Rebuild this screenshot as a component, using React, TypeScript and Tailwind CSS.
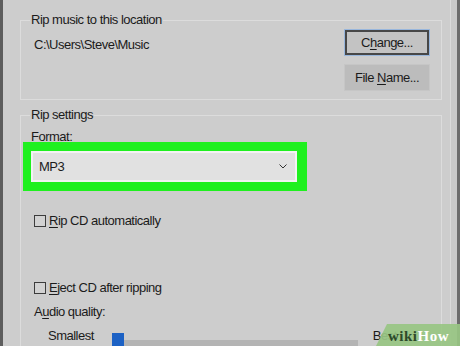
import React from 'react';

function CheckRow({ accel, rest }: { accel: string; rest: string }) {
    return (
        <div className="flex items-center gap-[3px] h-[16px]">
            <span className="w-[12px] h-[12px] border border-[#3c3c3c] bg-[#d2d2d2]" />
            <span>
                <u className="underline-offset-2">{accel}</u>
                {rest}
            </span>
        </div>
    );
}

export default function App() {
    return (
        <div className="relative flex h-[346px] w-[460px] overflow-hidden bg-[#cdcdcd] text-[13px] leading-[16px] tracking-[-0.5px] text-[#1b1b1b] font-['Liberation_Sans',Arial,sans-serif]">
            <div className="w-[3px] shrink-0 bg-[#5d5d5d]" />

            <div className="flex flex-1 flex-col gap-[7px] pl-[17px] pr-[8px] pt-[12px]">
                {/* Rip music to this location */}
                <fieldset className="border border-[#dcdcdc] pl-[13px] pr-[11px] pt-[1px] pb-[8px]">
                    <legend className="-ml-[4px] px-[1px]">Rip music to this location</legend>
                    <div className="flex justify-between">
                        <div className="mt-[8px]">C:\Users\Steve\Music</div>
                        <div className="flex flex-col gap-[8px]">
                            <button className="w-[86px] h-[27px] border border-[#98b6dc] p-0">
                                <div className="flex h-full items-center justify-center border-2 border-[#474747] bg-[#c3c3c3]">
                                    <span>
                                        C<u className="underline-offset-2">h</u>ange...
                                    </span>
                                </div>
                            </button>
                            <button className="flex w-[86px] h-[27px] items-center justify-center border border-[#c6c6c6] bg-[#bcbcbc]">
                                <span>
                                    File <u className="underline-offset-2">N</u>ame...
                                </span>
                            </button>
                        </div>
                    </div>
                </fieldset>

                {/* Rip settings */}
                <fieldset className="flex-1 border border-[#dcdcdc] pl-[13px] pr-[11px] pt-[6px]">
                    <legend className="-ml-[4px] px-[1px]">Rip settings</legend>
                    <div className="-ml-[3px]">Format:</div>

                    <div className="-ml-[11px] -mt-[3px] w-[284px] bg-[#1ff01f] pl-[8px] pr-[10px] py-[9px]">
                        <div className="flex h-[31px] items-center justify-between border-2 border-[#f3f3f3] bg-[#e1e1e1] pl-[6px] pr-[8px]">
                            <span>MP3</span>
                            <svg width="8" height="5" viewBox="0 0 8 5" fill="none">
                                <path d="M0.5 0.5 L4 4 L7.5 0.5" stroke="#333" strokeWidth="1" />
                            </svg>
                        </div>
                    </div>

                    <div className="mt-[22px]">
                        <CheckRow accel="R" rest="ip CD automatically" />
                    </div>
                    <div className="mt-[51px]">
                        <CheckRow accel="E" rest="ject CD after ripping" />
                    </div>
                    <div className="mt-[8px]">
                        A<u className="underline-offset-2">u</u>dio quality:
                    </div>
                    <div className="mt-[8px] flex items-start pl-[14px]">
                        <span>Smallest</span>
                        <div className="ml-[18px] flex items-start">
                            <div className="mt-[5px] w-[12px] h-[22px] bg-[#1c61c4]" />
                            <div className="mt-[12px] w-[234px] h-[6px] bg-[#b4b4b4]" />
                        </div>
                        <span className="ml-[15px]">Best</span>
                    </div>
                </fieldset>
            </div>

            <div className="w-[1px] shrink-0 bg-[#dadada]" />
            <div className="w-[6px] shrink-0 bg-[#c9c9c9]" />
            <div className="w-[3px] shrink-0 bg-[#6c6c6c]" />

            {/* watermark */}
            <div className="absolute bottom-0 right-0 h-[22px] w-[84px]">
                <svg className="absolute inset-0" width="84" height="22" viewBox="0 0 84 22">
                    <polygon points="11,0 84,0 84,22 0,22" fill="#98c683" fillOpacity="0.92" />
                </svg>
                <div className="absolute bottom-[2px] left-[12px] font-['Liberation_Serif',serif] text-[15px] leading-[16px] font-bold tracking-[0.5px]">
                    <span className="text-[#2d4a2a]">wiki</span>
                    <span className="text-white">How</span>
                </div>
            </div>
        </div>
    );
}
